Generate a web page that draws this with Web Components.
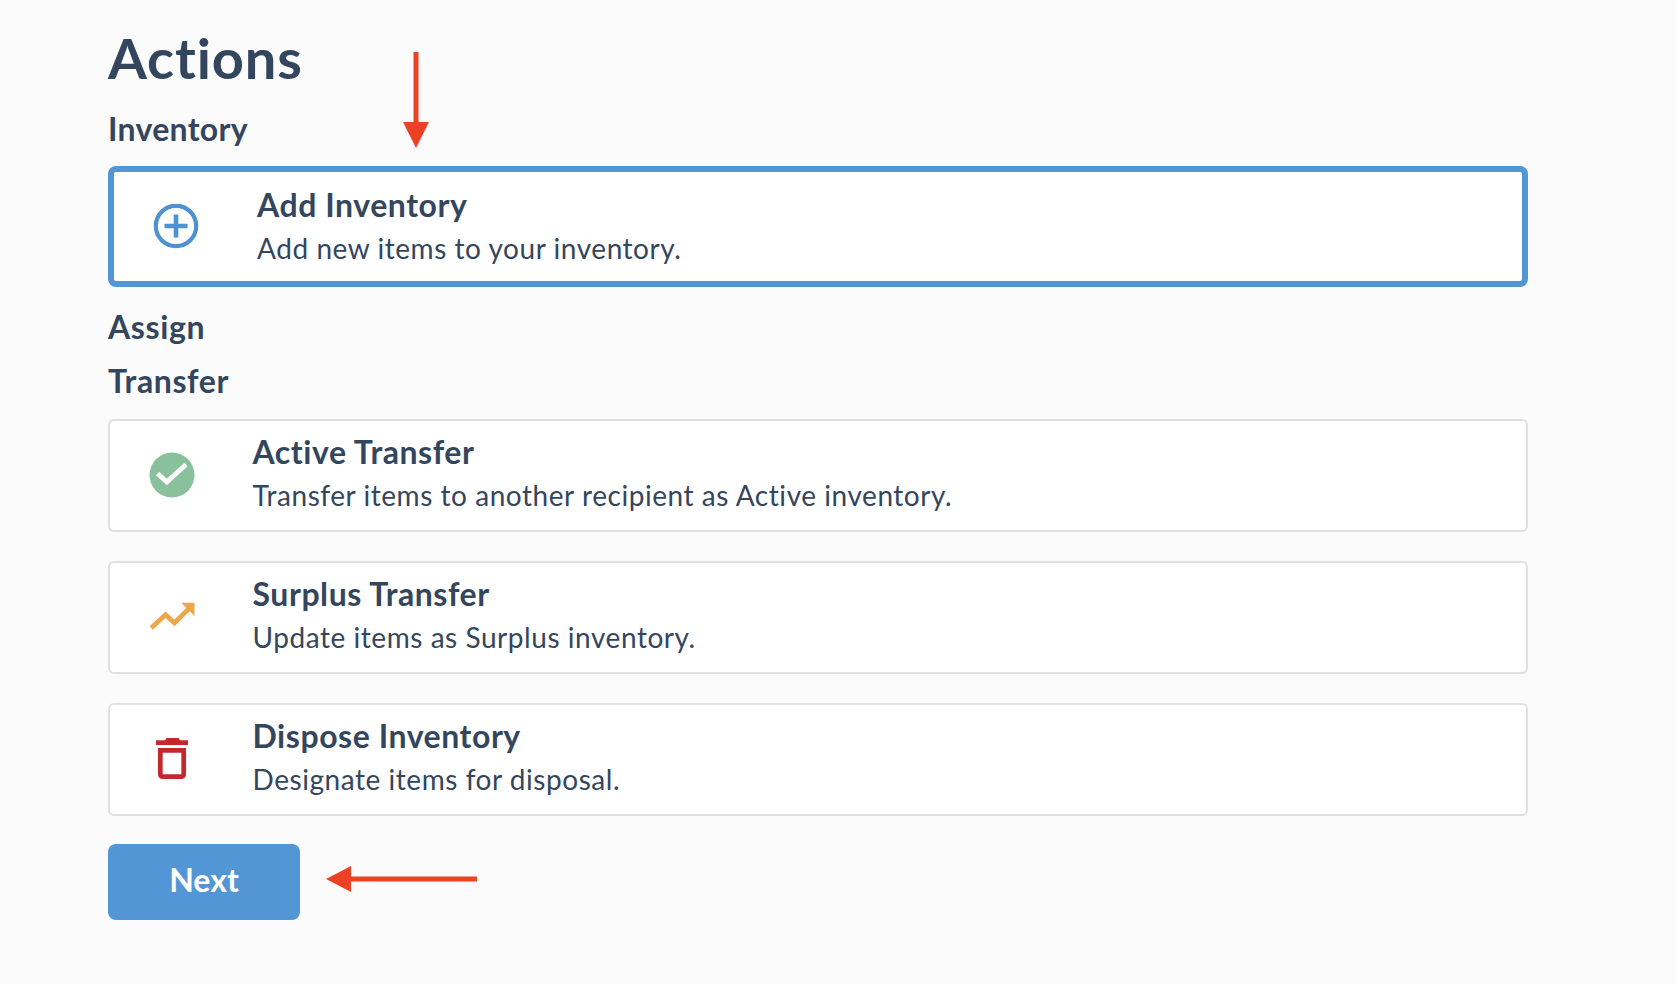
<!DOCTYPE html>
<html lang="en">
<head>
<meta charset="utf-8">
<title>Actions</title>
<style>
  html, body { margin: 0; height: 100%; background: #fbfbfb; }
  body { font-family: Lato, "Open Sans", sans-serif; color: #34465d; font-variant-ligatures: none; }
</style>
</head>
<body>
<actions-page>
  <section-heading level="title">Actions</section-heading>
  <section-heading level="first">Inventory</section-heading>
  <action-group kind="inventory">
    <action-card selected>
      <svg slot="icon" width="46" height="46" viewBox="0 0 46 46">
        <circle cx="23" cy="22" r="20.2" fill="none" stroke="#4f92d4" stroke-width="4.2"/>
        <path d="M23 10.5v23M11.5 22h23" fill="none" stroke="#4f92d4" stroke-width="4.6"/>
      </svg>
      <span slot="title">Add Inventory</span>
      Add new items to your inventory.
    </action-card>
  </action-group>
  <section-heading>Assign</section-heading>
  <section-heading>Transfer</section-heading>
  <action-group>
    <action-card>
      <svg slot="icon" width="46" height="46" viewBox="0 0 46 46">
        <circle cx="23" cy="23" r="22.5" fill="#8ac19d"/>
        <path d="M8.5 21.5 17.8 30 37 12.5" fill="none" stroke="#fff" stroke-width="4.8"/>
      </svg>
      <span slot="title">Active Transfer</span>
      Transfer items to another recipient as Active inventory.
    </action-card>
    <action-card>
      <svg slot="icon" width="46" height="46" viewBox="0 0 46 46">
        <path d="M2.2 34 16.5 20.8 25.5 29 40.500 14" fill="none" stroke="#eea749" stroke-width="4.7"/>
        <path d="M32.2 8.7h13.3V22z" fill="#eea749"/>
      </svg>
      <span slot="title">Surplus Transfer</span>
      Update items as Surplus inventory.
    </action-card>
    <action-card>
      <svg slot="icon" width="46" height="46" viewBox="0 0 46 46">
        <path d="M7 4.3h9l1.5-2.3h12l1.5 2.3h8V9H7z" fill="#c4282c"/>
        <path d="M11.3 14.3h23.4v24.2a2.2 2.2 0 0 1-2.2 2.2H13.5a2.2 2.2 0 0 1-2.2-2.2z" fill="none" stroke="#c4282c" stroke-width="4.7"/>
      </svg>
      <span slot="title">Dispose Inventory</span>
      Designate items for disposal.
    </action-card>
  </action-group>
  <next-button>Next</next-button>
  <annot-arrow dir="down" style="left:402.500px;top:52px"></annot-arrow>
  <annot-arrow dir="left" style="left:326px;top:866px"></annot-arrow>
</actions-page>

<script>
const pageTemplate = document.createElement("template");
pageTemplate.innerHTML = `
  <style>
    :host {
      display: flex;
      flex-direction: column;
      position: relative;
      box-sizing: border-box;
      width: 1528px;
      min-height: 984px;
      padding: 20px 0 0 108px;
    }
  </style>
  <slot></slot>
`;

class ActionsPage extends HTMLElement {
  constructor() {
    super();
    this.attachShadow({ mode: "open" }).appendChild(pageTemplate.content.cloneNode(true));
  }
}

const headingTemplate = document.createElement("template");
headingTemplate.innerHTML = `
  <style>
    :host {
      display: block;
      font-size: 32px;
      font-weight: 700;
      line-height: 54px;
      letter-spacing: 0.6px;
      color: #34465d;
    }
    :host([level="title"]) {
      font-size: 56px;
      line-height: 76px;
      letter-spacing: 0.9px;
    }
    :host([level="first"]) {
      padding-top: 6px;
      letter-spacing: 0.3px;
    }
  </style>
  <slot></slot>
`;

class SectionHeading extends HTMLElement {
  constructor() {
    super();
    this.attachShadow({ mode: "open" }).appendChild(headingTemplate.content.cloneNode(true));
  }
}

const groupTemplate = document.createElement("template");
groupTemplate.innerHTML = `
  <style>
    :host {
      display: flex;
      flex-direction: column;
      gap: 29px;
      padding: 11px 0 12px;
    }
    :host([kind="inventory"]) {
      padding: 10px 0 13px;
    }
  </style>
  <slot></slot>
`;

class ActionGroup extends HTMLElement {
  constructor() {
    super();
    this.attachShadow({ mode: "open" }).appendChild(groupTemplate.content.cloneNode(true));
  }
}

const cardTemplate = document.createElement("template");
cardTemplate.innerHTML = `
  <style>
    :host {
      display: flex;
      align-items: center;
      box-sizing: border-box;
      min-height: 113px;
      padding-left: 39px;
      background: #fff;
      border: 2px solid #e0e0e0;
      border-radius: 6px;
    }
    :host([selected]) {
      min-height: 121px;
      border: 6px solid #5296d5;
      border-radius: 8px;
    }
    .icon {
      flex: none;
      display: flex;
      width: 103.5px;
      padding-bottom: 2px;
    }
    :host([selected]) .icon {
      width: 104px;
      padding-bottom: 0;
    }
    .text {
      padding-bottom: 4px;
    }
    :host([selected]) .text {
      padding-bottom: 0;
    }
    .title {
      margin-bottom: 1px;
      font-size: 32px;
      font-weight: 700;
      line-height: 42px;
      letter-spacing: 0.55px;
    }
    .desc {
      font-size: 28px;
      line-height: 42px;
      letter-spacing: 0.55px;
    }
  </style>
  <div class="icon"><slot name="icon"></slot></div>
  <div class="text">
    <div class="title"><slot name="title"></slot></div>
    <div class="desc"><slot></slot></div>
  </div>
`;

class ActionCard extends HTMLElement {
  constructor() {
    super();
    this.attachShadow({ mode: "open" }).appendChild(cardTemplate.content.cloneNode(true));
  }
}

const buttonTemplate = document.createElement("template");
buttonTemplate.innerHTML = `
  <style>
    :host {
      display: flex;
      align-items: center;
      justify-content: center;
      box-sizing: border-box;
      width: 192px;
      height: 76px;
      margin-top: 16px;
      padding-bottom: 6px;
      background: #5296d5;
      border-radius: 8px;
      color: #fff;
      font-size: 32px;
      font-weight: 700;
    }
  </style>
  <slot></slot>
`;

class NextButton extends HTMLElement {
  constructor() {
    super();
    this.attachShadow({ mode: "open" }).appendChild(buttonTemplate.content.cloneNode(true));
  }
}

// callout arrows drawn over the page
const arrowTemplate = document.createElement("template");
arrowTemplate.innerHTML = `
  <style>
    :host { display: block; position: absolute; line-height: 0; }
    svg { display: none; }
    :host([dir="down"]) .down, :host([dir="left"]) .left { display: block; }
  </style>
  <svg class="down" width="26" height="96" viewBox="0 0 26 96">
    <path d="M13 0v72" stroke="#ec4124" stroke-width="5" fill="none"/>
    <path d="M0 70h26L13 96z" fill="#ec4124"/>
  </svg>
  <svg class="left" width="151" height="26" viewBox="0 0 151 26">
    <path d="M20 13h131" stroke="#ec4124" stroke-width="5" fill="none"/>
    <path d="M25 0v26L0 13z" fill="#ec4124"/>
  </svg>
`;

class AnnotArrow extends HTMLElement {
  constructor() {
    super();
    this.attachShadow({ mode: "open" }).appendChild(arrowTemplate.content.cloneNode(true));
  }
}

customElements.define("actions-page", ActionsPage);
customElements.define("section-heading", SectionHeading);
customElements.define("action-group", ActionGroup);
customElements.define("action-card", ActionCard);
customElements.define("next-button", NextButton);
customElements.define("annot-arrow", AnnotArrow);
</script>
</body>
</html>
